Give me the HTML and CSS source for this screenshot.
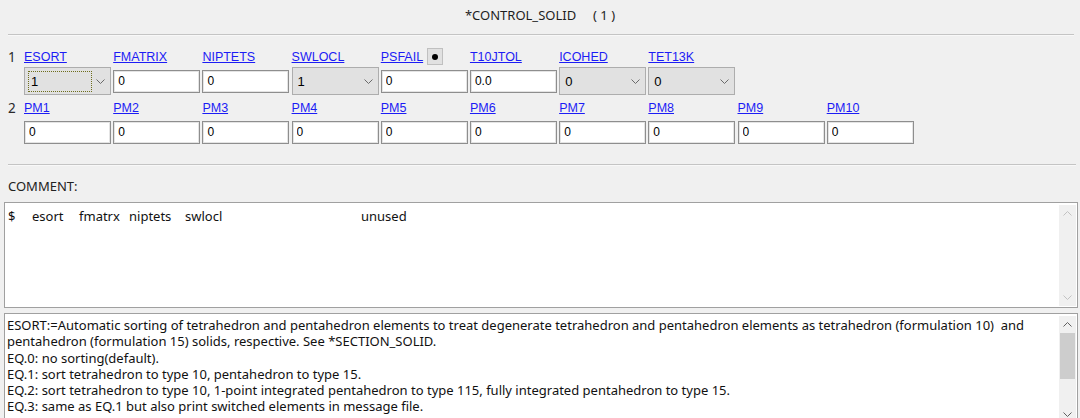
FILE: index.html
```html
<!DOCTYPE html>
<html lang="en">
<head>
    <meta charset="UTF-8">
    <meta name="viewport" content="width=device-width, initial-scale=1.0">
    <title>*CONTROL_SOLID</title>
    <link rel="stylesheet" href="styles.css">
</head>
<body>

<div class="title">*CONTROL_SOLID&nbsp;&nbsp;&nbsp;&nbsp;&nbsp;( 1 )</div>
<div class="rule"></div>

<!-- Card fields -->
<div class="card">
    <div class="card-row">
        <div class="row-num">1</div>
        <div class="fields">
            <div class="field">
                <a class="name" href="#">ESORT</a>
                <div class="ctl">
                    <div class="select"><span class="focus">1</span><svg class="chev" width="9" height="5" viewBox="0 0 9 5"><path d="M0.5 0.5 L4.5 4.5 L8.5 0.5" fill="none" stroke="currentColor"/></svg></div>
                </div>
            </div>
            <div class="field">
                <a class="name" href="#">FMATRIX</a>
                <div class="ctl"><input class="box" type="text" value="0"></div>
            </div>
            <div class="field">
                <a class="name" href="#">NIPTETS</a>
                <div class="ctl"><input class="box" type="text" value="0"></div>
            </div>
            <div class="field">
                <a class="name" href="#">SWLOCL</a>
                <div class="ctl">
                    <div class="select"><span class="val">1</span><svg class="chev" width="9" height="5" viewBox="0 0 9 5"><path d="M0.5 0.5 L4.5 4.5 L8.5 0.5" fill="none" stroke="currentColor"/></svg></div>
                </div>
            </div>
            <div class="field">
                <div class="name-wrap">
                    <a class="name" href="#">PSFAIL</a>
                    <span class="pick"><span class="dot"></span></span>
                </div>
                <div class="ctl"><input class="box" type="text" value="0"></div>
            </div>
            <div class="field">
                <a class="name" href="#">T10JTOL</a>
                <div class="ctl"><input class="box" type="text" value="0.0"></div>
            </div>
            <div class="field">
                <a class="name" href="#">ICOHED</a>
                <div class="ctl">
                    <div class="select"><span class="val">0</span><svg class="chev" width="9" height="5" viewBox="0 0 9 5"><path d="M0.5 0.5 L4.5 4.5 L8.5 0.5" fill="none" stroke="currentColor"/></svg></div>
                </div>
            </div>
            <div class="field">
                <a class="name" href="#">TET13K</a>
                <div class="ctl">
                    <div class="select"><span class="val">0</span><svg class="chev" width="9" height="5" viewBox="0 0 9 5"><path d="M0.5 0.5 L4.5 4.5 L8.5 0.5" fill="none" stroke="currentColor"/></svg></div>
                </div>
            </div>
        </div>
    </div>

    <div class="card-row">
        <div class="row-num">2</div>
        <div class="fields">
            <div class="field"><a class="name" href="#">PM1</a><div class="ctl"><input class="box" type="text" value="0"></div></div>
            <div class="field"><a class="name" href="#">PM2</a><div class="ctl"><input class="box" type="text" value="0"></div></div>
            <div class="field"><a class="name" href="#">PM3</a><div class="ctl"><input class="box" type="text" value="0"></div></div>
            <div class="field"><a class="name" href="#">PM4</a><div class="ctl"><input class="box" type="text" value="0"></div></div>
            <div class="field"><a class="name" href="#">PM5</a><div class="ctl"><input class="box" type="text" value="0"></div></div>
            <div class="field"><a class="name" href="#">PM6</a><div class="ctl"><input class="box" type="text" value="0"></div></div>
            <div class="field"><a class="name" href="#">PM7</a><div class="ctl"><input class="box" type="text" value="0"></div></div>
            <div class="field"><a class="name" href="#">PM8</a><div class="ctl"><input class="box" type="text" value="0"></div></div>
            <div class="field"><a class="name" href="#">PM9</a><div class="ctl"><input class="box" type="text" value="0"></div></div>
            <div class="field"><a class="name" href="#">PM10</a><div class="ctl"><input class="box" type="text" value="0"></div></div>
        </div>
    </div>
</div>

<div class="rule rule-low"></div>

<div class="section-label">COMMENT:</div>

<!-- Comment box -->
<div class="textbox comment">
    <div class="text">
        <div class="comment-line">
            <span class="c-dollar">$</span><span class="c-esort">esort</span><span class="c-fmatrx">fmatrx</span><span class="c-niptets">niptets</span><span class="c-swlocl">swlocl</span><span>unused</span>
        </div>
    </div>
    <div class="vscroll off">
        <span class="arrow"><svg width="9" height="5" viewBox="0 0 9 5"><path d="M0.5 4.5 L4.5 0.5 L8.5 4.5" fill="none" stroke="currentColor"/></svg></span>
        <span class="arrow"><svg width="9" height="5" viewBox="0 0 9 5"><path d="M0.5 0.5 L4.5 4.5 L8.5 0.5" fill="none" stroke="currentColor"/></svg></span>
    </div>
</div>

<!-- Keyword help -->
<div class="textbox help">
    <div class="text">
        <div>ESORT:=Automatic sorting of tetrahedron and pentahedron elements to treat degenerate tetrahedron and pentahedron elements as tetrahedron (formulation 10)&nbsp; and</div>
        <div>pentahedron (formulation 15) solids, respective. See *SECTION_SOLID.</div>
        <div>EQ.0: no sorting(default).</div>
        <div>EQ.1: sort tetrahedron to type 10, pentahedron to type 15.</div>
        <div>EQ.2: sort tetrahedron to type 10, 1-point integrated pentahedron to type 115, fully integrated pentahedron to type 15.</div>
        <div>EQ.3: same as EQ.1 but also print switched elements in message file.</div>
    </div>
    <div class="vscroll">
        <span class="arrow"><svg width="9" height="5" viewBox="0 0 9 5"><path d="M0.5 4.5 L4.5 0.5 L8.5 4.5" fill="none" stroke="currentColor"/></svg></span>
        <span class="thumb"></span>
        <span class="track"></span>
        <span class="arrow"><svg width="9" height="5" viewBox="0 0 9 5"><path d="M0.5 0.5 L4.5 4.5 L8.5 0.5" fill="none" stroke="currentColor"/></svg></span>
    </div>
</div>

</body>
</html>
```

FILE: styles.css
```css
body {
    font-family: "Noto Sans", sans-serif;
    background-color: #f0f0f0;
    color: #1e1e1e;
    margin: 0;
    height: 418px;
    overflow: hidden;
}

.title {
    height: 34px;
    line-height: 30px;
    text-align: center;
    font-size: 13px;
}

.rule {
    margin: 0 6px 0 8px;
    border-top: 1px solid #c4c4c4;
    border-bottom: 1px solid #f8f8f8;
}

.rule-low {
    margin: 18px 4px 0 8px;
}

.card {
    padding: 13px 0 0 8px;
}

.card-row {
    display: flex;
    margin-bottom: 5px;
}

.row-num {
    width: 16px;
    line-height: 16px;
    font-size: 13.5px;
    color: #2a2a2a;
}

.fields {
    display: grid;
    grid-template-columns: repeat(10, 87px);
    column-gap: 2.2px;
}

.field {
    display: flex;
    flex-direction: column;
}

.name-wrap {
    display: flex;
    align-items: center;
    height: 16px;
    margin-bottom: 2px;
}

.name {
    display: block;
    height: 16px;
    line-height: 16px;
    margin-bottom: 2px;
    font-family: "Liberation Sans", Arial, sans-serif;
    font-size: 12.5px;
    color: #1c1cf5;
    text-decoration: underline;
    align-self: flex-start;
}

.name-wrap .name {
    margin-bottom: 0;
}

.pick {
    display: flex;
    align-items: center;
    justify-content: center;
    width: 14px;
    height: 15px;
    margin-left: 4px;
    margin-top: -1px;
    background-color: #e1e1e1;
    border: 1px solid #c0c0c0;
}

.dot {
    width: 6px;
    height: 6px;
    border-radius: 50%;
    background-color: #000;
}

.ctl {
    height: 28px;
    display: flex;
    align-items: center;
}

.box {
    box-sizing: border-box;
    width: 87px;
    height: 23px;
    margin: 0;
    padding: 0 4px;
    border: 1px solid #8e8e8e;
    box-shadow: inset 0 0 0 1px #e4e4e4;
    background-color: #fff;
    font-family: "Liberation Sans", Arial, sans-serif;
    font-size: 12px;
    color: #000;
    outline: none;
}

.select {
    box-sizing: border-box;
    width: 87px;
    height: 28px;
    display: flex;
    align-items: center;
    justify-content: space-between;
    padding: 0 5px 0 3px;
    background-color: #e1e1e1;
    border: 1px solid #adadad;
    font-family: "Liberation Sans", Arial, sans-serif;
    font-size: 13px;
    color: #000;
}

.select .val {
    padding-left: 2px;
}

.select .focus {
    box-sizing: border-box;
    width: 64px;
    height: 21px;
    line-height: 19px;
    padding-left: 2px;
    border: 1px dotted #6e6e1c;
}

.chev {
    color: #6a6a6a;
}

.section-label {
    margin: 12px 0 0 8px;
    height: 24px;
    line-height: 16px;
    font-size: 13px;
    color: #222;
}

.textbox {
    box-sizing: border-box;
    display: flex;
    margin: 0 2px 0 4px;
    background-color: #fff;
    border: 1px solid #a0a0a0;
}

.textbox .text {
    flex: 1;
    overflow: hidden;
    font-size: 13px;
    color: #111;
    white-space: nowrap;
}

.comment {
    height: 106px;
}

.comment .text {
    padding: 5px 0 0 3px;
    line-height: 16px;
}

.comment-line span {
    display: inline-block;
}

.c-dollar { width: 24px; }
.c-esort { width: 47px; }
.c-fmatrx { width: 50px; }
.c-niptets { width: 56px; }
.c-swlocl { width: 176px; }

.help {
    margin-top: 5px;
    height: 112px;
}

.help .text {
    padding: 3px 0 0 2px;
    line-height: 16.3px;
}

.vscroll {
    width: 17px;
    margin: 2px 1px 1px 0;
    display: flex;
    flex-direction: column;
    align-items: center;
    background-color: #f0f0f0;
    color: #606060;
}

.vscroll.off {
    justify-content: space-between;
    color: #c2c2c2;
}

.arrow {
    height: 17px;
    display: flex;
    align-items: center;
    justify-content: center;
}

.thumb {
    width: 15px;
    height: 46px;
    background-color: #cdcdcd;
}

.track {
    flex: 1;
}
```
